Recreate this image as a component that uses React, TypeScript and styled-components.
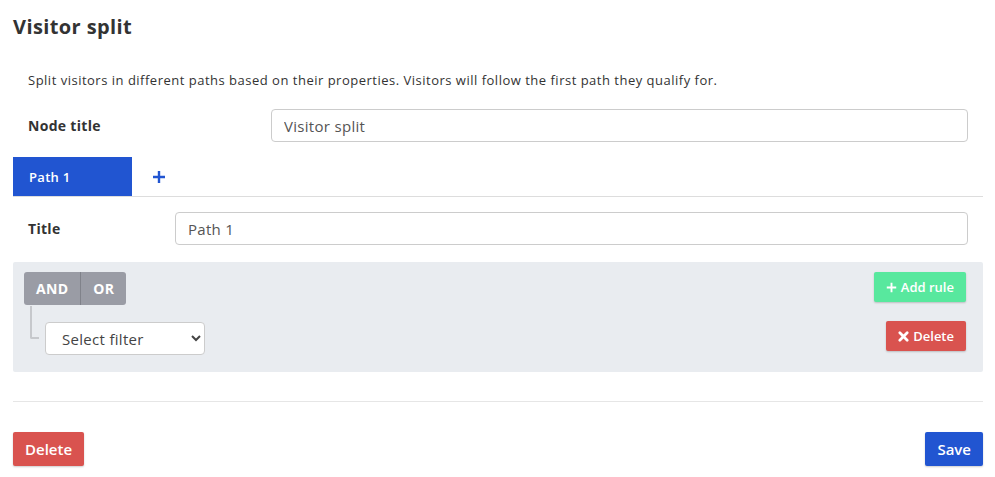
import React from 'react';
import styled, { createGlobalStyle } from 'styled-components';

const GlobalStyle = createGlobalStyle`
  body {
    margin: 0;
    background: #fff;
    font-family: 'Open Sans', 'Liberation Sans', sans-serif;
    color: #333;
    letter-spacing: 0.3px;
  }
`;

const Page = styled.div`
  padding: 15px 12px 11px 13px;
`;

const Heading = styled.h2`
  margin: 0;
  font-size: 20px;
  line-height: 24px;
  font-weight: 700;
  color: #333;
  letter-spacing: 0.4px;
`;

const Body = styled.div`
  padding: 32px 15px 0;
`;

const Description = styled.p`
  margin: 0;
  font-size: 13px;
  line-height: 18px;
  color: #333;
  letter-spacing: 0.5px;
`;

const FormRow = styled.div<{ labelWidth: number }>`
  display: grid;
  grid-template-columns: ${({ labelWidth }) => labelWidth}px 1fr;
  align-items: center;
  padding: 0 15px;
`;

const Label = styled.label`
  font-size: 14px;
  font-weight: 700;
  color: #333;
`;

const TextInput = styled.input`
  height: 33px;
  box-sizing: border-box;
  border: 1px solid #ccc;
  border-radius: 4px;
  padding: 0 12px;
  font-family: inherit;
  font-size: 15px;
  letter-spacing: 0.3px;
  color: #555;
  background: #fff;
  outline: none;
`;

const NodeTitleRow = styled(FormRow)`
  margin-top: 20px;
`;

const Tabs = styled.div`
  display: flex;
  align-items: stretch;
  height: 39px;
  margin-top: 15px;
  border-bottom: 1px solid #ddd;
`;

const Tab = styled.div<{ active?: boolean }>`
  display: flex;
  align-items: center;
  width: 119px;
  padding-left: 16px;
  box-sizing: border-box;
  background: ${({ active }) => (active ? '#2155d1' : 'transparent')};
  color: #fff;
  font-size: 13px;
  font-weight: 600;
`;

const AddTab = styled.button`
  display: flex;
  align-items: center;
  justify-content: center;
  width: 54px;
  border: 0;
  background: transparent;
  color: #2155d1;
  padding: 0;
  cursor: pointer;
`;

const TitleRow = styled(FormRow)`
  margin-top: 15px;
`;

const RulePanel = styled.div`
  margin-top: 17px;
  background: #e9ecf0;
  border-radius: 2px;
  height: 110px;
  box-sizing: border-box;
  padding: 10px 17px 0 11px;
  display: flex;
  justify-content: space-between;
`;

const RuleLeft = styled.div`
  display: flex;
  flex-direction: column;
`;

const Combinator = styled.div`
  display: flex;
  height: 33px;
  border-radius: 3px;
  overflow: hidden;
  align-self: flex-start;
`;

const CombinatorButton = styled.div<{ divider?: boolean }>`
  display: flex;
  align-items: center;
  padding: 0 ${({ divider }) => (divider ? 12 : 12)}px;
  background: #9a9ca5;
  color: #fff;
  font-size: 14px;
  font-weight: 700;
  border-left: ${({ divider }) => (divider ? '1px solid #80828a' : '0')};
`;

const RuleRow = styled.div`
  display: flex;
  align-items: flex-end;
  margin-left: 6px;
`;

const Connector = styled.div`
  width: 9px;
  height: 33px;
  border-left: 2px solid #c6c8cc;
  border-bottom: 2px solid #c6c8cc;
  box-sizing: border-box;
  border-bottom-left-radius: 2px;
  margin-bottom: 16px;
`;

const Select = styled.select`
  margin: 17px 0 0 6px;
  width: 160px;
  height: 33px;
  border: 1px solid #ccc;
  border-radius: 4px;
  background: #fff;
  font-family: inherit;
  font-size: 15px;
  letter-spacing: 0.3px;
  color: #444;
  padding: 0 10px 0 12px;
  outline: none;
`;

const RuleRight = styled.div`
  display: flex;
  flex-direction: column;
  align-items: flex-end;
  gap: 19px;
`;

const Button = styled.button<{ tone: 'green' | 'red' | 'blue'; size?: 'sm' | 'md' }>`
  display: inline-flex;
  align-items: center;
  gap: 4px;
  border: 0;
  border-radius: 2px;
  box-shadow: 0 1px 2px rgba(0, 0, 0, 0.2);
  font-family: inherit;
  font-weight: 600;
  color: #fff;
  cursor: pointer;
  background: ${({ tone }) =>
    tone === 'green' ? '#58e89e' : tone === 'red' ? '#d9534f' : '#2155d1'};
  height: ${({ size }) => (size === 'sm' ? '30px' : '34px')};
  font-size: ${({ size }) => (size === 'sm' ? '13px' : '15px')};
  padding: 0 12px;
`;

const Divider = styled.hr`
  margin: 29px 0 0;
  border: 0;
  border-top: 1px solid #e6e6e6;
`;

const Footer = styled.div`
  display: flex;
  justify-content: space-between;
  margin-top: 30px;
`;

const PlusIcon = ({ size = 14 }: { size?: number }) => (
  <svg width={size} height={size} viewBox="0 0 14 14">
    <path d="M7 1v12M1 7h12" stroke="currentColor" strokeWidth="2.4" />
  </svg>
);

const TimesIcon = () => (
  <svg width="11" height="11" viewBox="0 0 12 12">
    <path d="M2 2l8 8M10 2l-8 8" stroke="currentColor" strokeWidth="3" strokeLinecap="round" />
  </svg>
);

export default function App() {
  return (
    <Page>
      <GlobalStyle />
      <Heading>Visitor split</Heading>
      <Body>
        <Description>
          Split visitors in different paths based on their properties. Visitors will follow the first path they qualify for.
        </Description>
      </Body>
      <NodeTitleRow labelWidth={243}>
        <Label>Node title</Label>
        <TextInput defaultValue="Visitor split" />
      </NodeTitleRow>
      <Tabs>
        <Tab active>Path 1</Tab>
        <AddTab>
          <PlusIcon />
        </AddTab>
      </Tabs>
      <TitleRow labelWidth={147}>
        <Label>Title</Label>
        <TextInput defaultValue="Path 1" />
      </TitleRow>
      <RulePanel>
        <RuleLeft>
          <Combinator>
            <CombinatorButton>AND</CombinatorButton>
            <CombinatorButton divider>OR</CombinatorButton>
          </Combinator>
          <RuleRow>
            <Connector />
            <Select defaultValue="">
              <option value="">Select filter</option>
            </Select>
          </RuleRow>
        </RuleLeft>
        <RuleRight>
          <Button tone="green" size="sm">
            <PlusIcon size={11} />
            Add rule
          </Button>
          <Button tone="red" size="sm">
            <TimesIcon />
            Delete
          </Button>
        </RuleRight>
      </RulePanel>
      <Divider />
      <Footer>
        <Button tone="red">Delete</Button>
        <Button tone="blue">Save</Button>
      </Footer>
    </Page>
  );
}
